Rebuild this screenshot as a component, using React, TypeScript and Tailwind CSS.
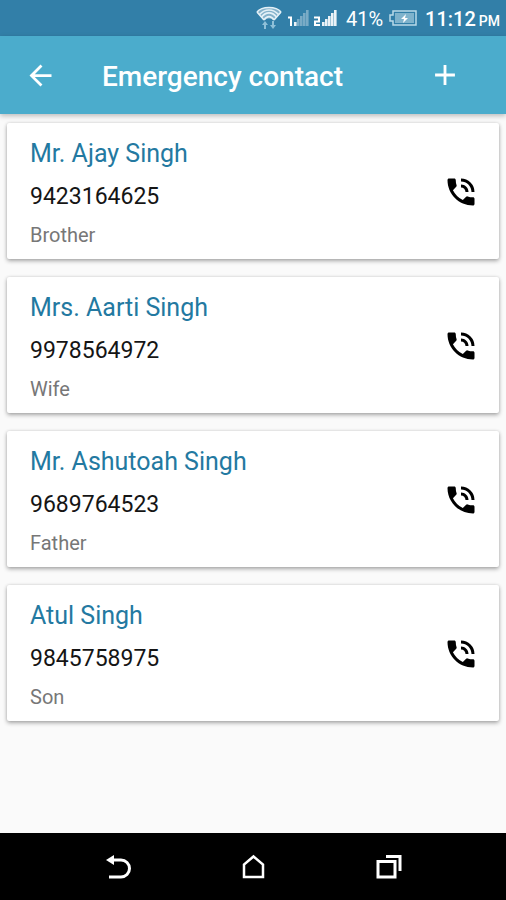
import { MdAdd, MdArrowBack, MdPhoneInTalk } from "react-icons/md";

type Contact = { name: string; phone: string; relation: string };

const contacts: Contact[] = [
  { name: "Mr. Ajay Singh", phone: "9423164625", relation: "Brother" },
  { name: "Mrs. Aarti Singh", phone: "9978564972", relation: "Wife" },
  { name: "Mr. Ashutoah Singh", phone: "9689764523", relation: "Father" },
  { name: "Atul Singh", phone: "9845758975", relation: "Son" },
];

function WifiIcon() {
  return (
    <svg width="26" height="24" viewBox="0 0 26 24" fill="none" aria-hidden="true">
      <path d="M1 6C6 0 20 0 25 6L18 14Q13 11 8 14Z" fill="#fff" fillOpacity="0.4" />
      <g stroke="#e4f1f7" strokeWidth="1.6">
        <path d="M1 6C6 0 20 0 25 6" />
        <path d="M3.500 8.500C9 2.500 17 2.500 22.500 8.500" />
        <path d="M5.500 11C10 5.500 16 5.500 20.500 11" />
        <path d="M8 14C11 9.500 15 9.500 18 14" />
        <path d="M1 6l7 8M25 6l-7 8" />
      </g>
      <path d="M9 15l3 4h-2v4H8v-4H6zM17 23l-3-4h2v-4h2v4h2z" fill="#8fc0d8" />
    </svg>
  );
}

function SignalIcon({ sim, level }: { sim: 1 | 2; level: number }) {
  const start = sim === 1 ? 5 : 7;
  return (
    <svg width={sim === 1 ? 22 : 24} height="18" viewBox={sim === 1 ? "0 0 22 18" : "0 0 24 18"} aria-hidden="true">
      {sim === 1 ? (
        <path d="M0 8.500h3V17" fill="none" stroke="#fff" strokeWidth="2" />
      ) : (
        <path d="M0 8.500h5v4H1V16h5" fill="none" stroke="#fff" strokeWidth="2" />
      )}
      {[4, 7, 10, 13, 16].map((h, i) => (
        <rect
          key={h}
          x={start + i * 3 + 1}
          y={17 - h}
          width={2.6}
          height={h}
          fill="#fff"
          fillOpacity={i < level ? 0.9 : 0.35}
        />
      ))}
    </svg>
  );
}

function BatteryIcon() {
  return (
    <svg width="28" height="18" viewBox="0 0 28 18" fill="none" aria-hidden="true">
      <path d="M4 2h23v14H4v-4H1V6h3z" stroke="#b9dae8" strokeWidth="1.500" />
      <path d="M6 4h19v10H6z" fill="#7fb3cc" />
      <path d="M17 5l-5 5h3l-1 4 5-5h-3z" fill="#fff" />
    </svg>
  );
}

function StatusBar() {
  return (
    <div className="flex h-9 items-center justify-end bg-[#327fa8] pr-1.5 text-white">
      <WifiIcon />
      <div className="ml-1.5 flex items-center gap-1">
        <SignalIcon sim={1} level={1} />
        <SignalIcon sim={2} level={5} />
      </div>
      <span className="mt-0.5 ml-2 text-xl leading-6">41%</span>
      <span className="ml-1.5">
        <BatteryIcon />
      </span>
      <span className="mt-0.5 ml-2 text-xl leading-6 font-medium">
        11:12 <span className="-ml-0.5 text-sm">PM</span>
      </span>
    </div>
  );
}

function ContactCard({ name, phone, relation }: Contact) {
  return (
    <li className="flex items-center justify-between rounded-xs bg-white pt-3 pr-5 pb-2.5 pl-[23px] shadow-[0_2px_4px_rgba(0,0,0,0.32),0_0_3px_rgba(0,0,0,0.12)]">
      <div>
        <h2 className="text-[25px] leading-[38px] text-[#2379a1]">{name}</h2>
        <p className="mt-2 text-[23px] leading-8 text-[#151515]">{phone}</p>
        <p className="mt-2 text-xl leading-7 text-[#777777]">{relation}</p>
      </div>
      <button type="button" aria-label={`Call ${name}`} className="text-black">
        <MdPhoneInTalk size={36} />
      </button>
    </li>
  );
}

function NavigationBar() {
  return (
    <nav className="flex h-[67px] items-center justify-center gap-[107px] bg-black text-white">
      <button type="button" aria-label="Back">
        <svg width="28" height="28" viewBox="0 0 28 28" fill="none">
          <path d="M8 7h9a8 8 0 0 1 0 17H5" stroke="currentColor" strokeWidth="3" />
          <path d="M2 7l8-5v10z" fill="currentColor" />
        </svg>
      </button>
      <button type="button" aria-label="Home">
        <svg width="28" height="28" viewBox="0 0 28 28" fill="none">
          <path d="M5 24V11.500l9.500-8 9.500 8V24z" stroke="currentColor" strokeWidth="2.500" />
        </svg>
      </button>
      <button type="button" aria-label="Recent apps">
        <svg width="28" height="28" viewBox="0 0 28 28" fill="none">
          <path d="M4 8.500h17V24H4z" stroke="currentColor" strokeWidth="3" />
          <path d="M12 3.500h14V18" stroke="currentColor" strokeWidth="3" />
        </svg>
      </button>
    </nav>
  );
}

export default function App() {
  return (
    <div className="flex min-h-screen flex-col bg-[#fafafa] font-[Roboto,sans-serif]">
      <StatusBar />
      <header className="z-10 flex h-[78px] items-center bg-[#4baccc] pr-11 pl-6 text-white shadow-[0_2px_5px_rgba(0,0,0,0.25)]">
        <button type="button" aria-label="Back">
          <MdArrowBack size={33} />
        </button>
        <h1 className="mt-1 ml-[45px] flex-1 text-[28px] leading-9 font-medium">Emergency contact</h1>
        <button type="button" aria-label="Add contact">
          <MdAdd size={34} />
        </button>
      </header>
      <main className="flex-1 px-[7px] pt-[9px] pb-5">
        <ul className="flex flex-col gap-[18px]">
          {contacts.map((contact) => (
            <ContactCard key={contact.phone} {...contact} />
          ))}
        </ul>
      </main>
      <NavigationBar />
    </div>
  );
}
